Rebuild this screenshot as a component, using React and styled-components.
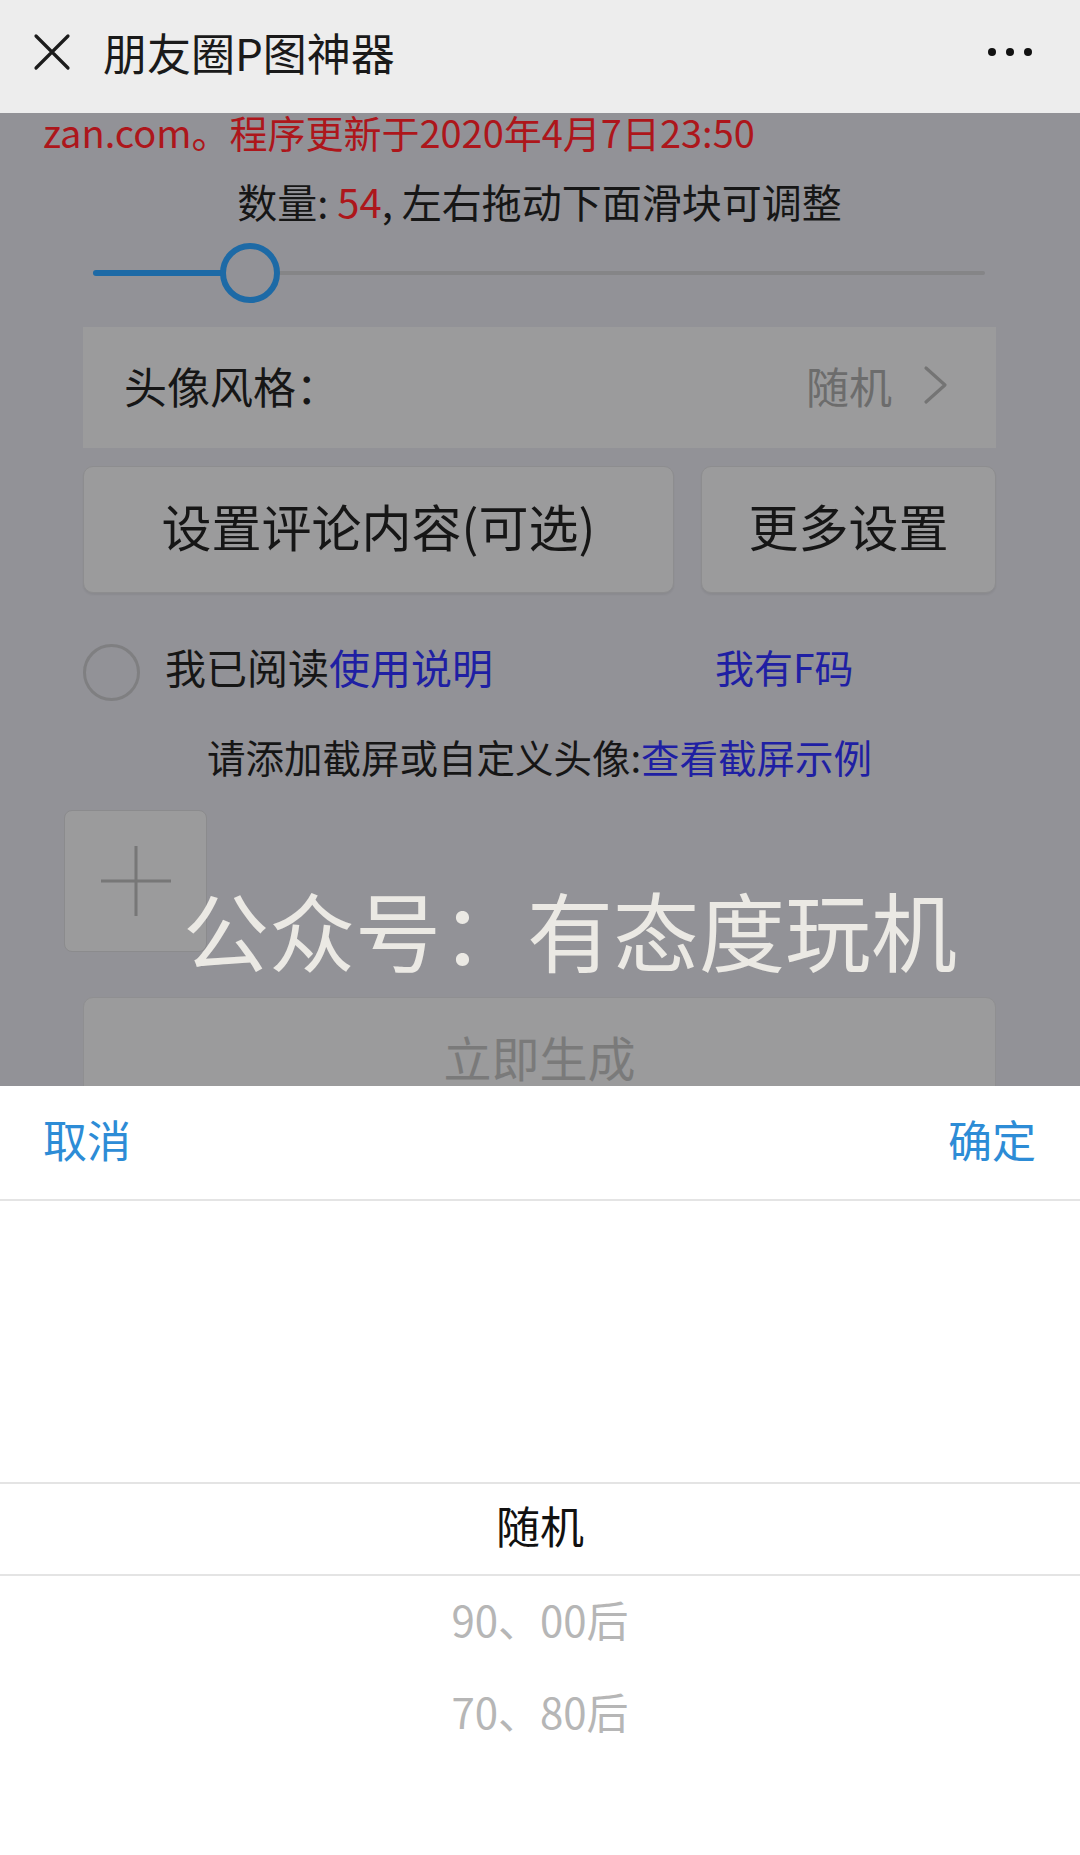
import React from "react";
import styled, { createGlobalStyle } from "styled-components";

const colors = {
  nav: "#ededed",
  mask: "#929297",
  card: "#9b9b9c",
  ink: "#161616",
  muted: "#6c6c6c",
  red: "#ad161b",
  link: "#1f1fa3",
  slider: "#1d6aa6",
  sheetBlue: "#2d8cd6",
  line: "#e4e4e4",
};

const SLIDER_MIN = 10;
const SLIDER_MAX = 260;
const count = 54;

const options = ["随机", "90、00后", "70、80后"];

const GlobalStyle = createGlobalStyle`
  html, body {
    margin: 0;
    padding: 0;
    background: #ffffff;
  }
  body {
    font-family: "Noto Sans CJK SC", "Noto Sans", sans-serif;
  }
  * {
    box-sizing: border-box;
  }
`;

const CloseIcon = () => (
  <svg width="38" height="38" viewBox="0 0 38 38">
    <path d="M3 3 L35 35 M35 3 L3 35" stroke="#1c1c1c" strokeWidth="3.2" strokeLinecap="round" />
  </svg>
);

const Chevron = () => (
  <svg width="28" height="40" viewBox="0 0 28 40">
    <path d="M4 3 L23 20 L4 37" fill="none" stroke="#747474" strokeWidth="3.2" strokeLinecap="round" strokeLinejoin="round" />
  </svg>
);

const PlusIcon = () => (
  <svg width="72" height="72" viewBox="0 0 72 72">
    <path d="M36 1 V71 M1 36 H71" stroke="#777777" strokeWidth="3" />
  </svg>
);

const App = () => {
  const percent = ((count - SLIDER_MIN) / (SLIDER_MAX - SLIDER_MIN)) * 100;

  return (
    <Page>
      <GlobalStyle />
      <NavBar>
        <CloseIcon />
        <NavTitle>朋友圈P图神器</NavTitle>
        <MoreDots>
          <Dot />
          <Dot />
          <Dot />
        </MoreDots>
      </NavBar>

      <Content>
        <Notice>zan.com。程序更新于2020年4月7日23:50</Notice>
        <Quantity>
          数量: <Red>54</Red>, 左右拖动下面滑块可调整
        </Quantity>

        <Slider>
          <Track />
          <Fill style={{ width: `${percent}%` }} />
          <Thumb style={{ left: `${percent}%` }} />
        </Slider>

        <StyleCard>
          <CardLabel>头像风格：</CardLabel>
          <CardValue>随机</CardValue>
          <Chevron />
        </StyleCard>

        <ButtonRow>
          <GrayButton>设置评论内容(可选)</GrayButton>
          <GrayButton>更多设置</GrayButton>
        </ButtonRow>

        <AgreeRow>
          <Radio />
          <AgreeText>
            我已阅读<LinkText>使用说明</LinkText>
          </AgreeText>
          <FCode>我有F码</FCode>
        </AgreeRow>

        <Hint>
          请添加截屏或自定义头像:<LinkText>查看截屏示例</LinkText>
        </Hint>

        <UploadBox>
          <PlusIcon />
        </UploadBox>

        <GenerateButton>立即生成</GenerateButton>

        <Watermark>公众号：有态度玩机</Watermark>
      </Content>

      <Sheet>
        <SheetHeader>
          <SheetAction>取消</SheetAction>
          <SheetAction>确定</SheetAction>
        </SheetHeader>
        <Picker>
          {options.map((label, i) => (
            <PickerItem key={label} $active={i === 0}>
              {label}
            </PickerItem>
          ))}
        </Picker>
      </Sheet>
    </Page>
  );
};

export default App;

/** page **/
const Page = styled.div`
  width: 1080px;
  height: 1855px;
  display: flex;
  flex-direction: column;
  overflow: hidden;
`;

/** nav bar **/
const NavBar = styled.header`
  height: 113px;
  flex-shrink: 0;
  display: flex;
  align-items: center;
  padding: 0 48px 10px 33px;
  background: ${colors.nav};
`;

const NavTitle = styled.h1`
  margin: 0 0 0 32px;
  font-size: 44px;
  font-weight: 400;
  color: #1a1a1a;
  line-height: 1;
`;

const MoreDots = styled.div`
  margin-left: auto;
  display: flex;
  gap: 10px;
`;

const Dot = styled.span`
  width: 8px;
  height: 8px;
  border-radius: 50%;
  background: #111111;
`;

/** masked page **/
const Content = styled.main`
  position: relative;
  height: 973px;
  flex-shrink: 0;
  overflow: hidden;
  padding: 0 84px 0 83px;
  background: ${colors.mask};
`;

const Notice = styled.p`
  margin: 0 0 0 -40px;
  font-size: 38px;
  line-height: 38px;
  color: ${colors.red};
  white-space: nowrap;
`;

const Quantity = styled.p`
  margin: 25px 0 0;
  text-align: center;
  font-size: 40px;
  line-height: 50px;
  color: ${colors.ink};
`;

const Red = styled.span`
  color: ${colors.red};
`;

const Slider = styled.div`
  position: relative;
  height: 60px;
  margin: 17px 11px 0 10px;
`;

const Track = styled.div`
  position: absolute;
  left: 0;
  right: 0;
  top: 28px;
  height: 4px;
  border-radius: 2px;
  background: #858587;
`;

const Fill = styled.div`
  position: absolute;
  left: 0;
  top: 27px;
  height: 6px;
  border-radius: 3px;
  background: ${colors.slider};
`;

const Thumb = styled.div`
  position: absolute;
  top: 0;
  width: 60px;
  height: 60px;
  margin-left: -30px;
  border-radius: 50%;
  border: 6px solid ${colors.slider};
  background: ${colors.mask};
`;

const StyleCard = styled.div`
  height: 121px;
  margin-top: 24px;
  display: flex;
  align-items: center;
  padding: 0 46px 6px 41px;
  background: ${colors.card};
`;

const CardLabel = styled.span`
  font-size: 43px;
  color: ${colors.ink};
`;

const CardValue = styled.span`
  margin: 0 30px 0 auto;
  font-size: 43px;
  color: ${colors.muted};
`;

const ButtonRow = styled.div`
  display: grid;
  grid-template-columns: 591px 1fr;
  gap: 27px;
  margin-top: 18px;
`;

const GrayButton = styled.div`
  height: 127px;
  display: flex;
  align-items: center;
  justify-content: center;
  padding-bottom: 10px;
  border: 1px solid #8d8d8f;
  border-radius: 10px;
  background: ${colors.card};
  box-shadow: 0 2px 2px rgba(0, 0, 0, 0.06);
  font-size: 50px;
  color: ${colors.ink};
`;

const AgreeRow = styled.div`
  height: 58px;
  margin-top: 50px;
  display: flex;
  align-items: center;
`;

const Radio = styled.span`
  width: 57px;
  height: 57px;
  border-radius: 50%;
  border: 3px solid #7f7f81;
`;

const AgreeText = styled.span`
  margin: 0 0 12px 25px;
  font-size: 41px;
  color: ${colors.ink};
`;

const LinkText = styled.span`
  color: ${colors.link};
`;

const FCode = styled.span`
  margin: 0 0 12px 222px;
  font-size: 39px;
  color: ${colors.link};
`;

const Hint = styled.p`
  margin: 30px 0 0;
  text-align: center;
  font-size: 38.5px;
  line-height: 50px;
  color: ${colors.ink};
`;

const UploadBox = styled.div`
  width: 143px;
  height: 142px;
  margin: 29px 0 0 -19px;
  display: flex;
  align-items: center;
  justify-content: center;
  border: 1px solid #8b8b8d;
  border-radius: 8px;
  background: ${colors.card};
`;

const GenerateButton = styled.div`
  height: 127px;
  margin-top: 45px;
  display: flex;
  align-items: center;
  justify-content: center;
  padding-bottom: 10px;
  border: 1px solid #8f8f91;
  border-radius: 10px;
  background: ${colors.card};
  font-size: 48px;
  color: #7a7a7a;
`;

const Watermark = styled.div`
  position: absolute;
  left: 183px;
  top: 773px;
  font-size: 86px;
  line-height: 1;
  color: #ebe9e4;
  white-space: nowrap;
  pointer-events: none;
`;

/** bottom sheet **/
const Sheet = styled.section`
  flex: 1;
  display: flex;
  flex-direction: column;
  background: #ffffff;
`;

const SheetHeader = styled.div`
  height: 115px;
  flex-shrink: 0;
  display: flex;
  align-items: center;
  justify-content: space-between;
  padding: 0 44px 7px 43px;
  border-bottom: 2px solid ${colors.line};
`;

const SheetAction = styled.span`
  font-size: 44px;
  color: ${colors.sheetBlue};
`;

const Picker = styled.div`
  flex: 1;
  display: flex;
  flex-direction: column;
  padding-top: 281px;
`;

const PickerItem = styled.div`
  height: ${(p) => (p.$active ? "94px" : "92px")};
  flex-shrink: 0;
  display: flex;
  align-items: center;
  justify-content: center;
  padding-bottom: 8px;
  font-size: ${(p) => (p.$active ? "44px" : "42px")};
  color: ${(p) => (p.$active ? "#111111" : "#b6b6b6")};
  border-top: ${(p) => (p.$active ? `2px solid ${colors.line}` : "none")};
  border-bottom: ${(p) => (p.$active ? `2px solid ${colors.line}` : "none")};
`;
